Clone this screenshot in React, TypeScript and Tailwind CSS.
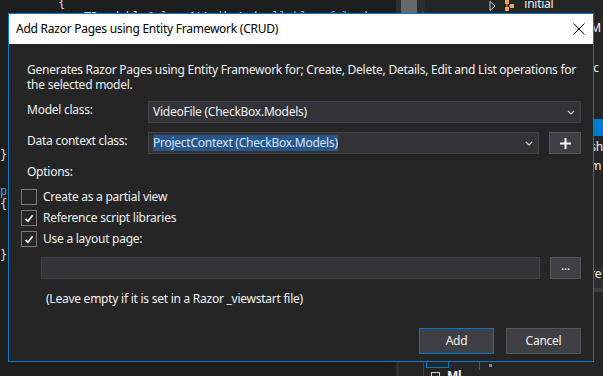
import React from "react";

const ui = { fontFamily: '"Noto Sans", "Open Sans", sans-serif' };
const mono = { fontFamily: '"DejaVu Sans Mono", "Liberation Mono", monospace' };

const Chevron = () => (
  <svg width="8" height="5" viewBox="0 0 8 5" className="shrink-0">
    <path d="M1 1 L4 4 L7 1" fill="none" stroke="#d0d0d0" strokeWidth="1.2" />
  </svg>
);

const Check = () => (
  <svg width="10" height="9" viewBox="0 0 10 9">
    <path d="M1.5 4.8 L4 7.3 L8.6 1.2" fill="none" stroke="#f1f1f1" strokeWidth="1.7" />
  </svg>
);

const CheckRow = ({ label, checked }: { label: string; checked?: boolean }) => (
  <div className="flex items-center gap-[6px] h-[16px]">
    <div className="w-[16px] h-[16px] border border-[#7a7a7a] flex items-center justify-center">
      {checked && <Check />}
    </div>
    <span className="leading-[16px]">{label}</span>
  </div>
);

// editor, scrollbar and solution explorer behind the dialog
const Backdrop = () => (
  <div className="flex w-full h-full">
    <div className="w-[398px] h-full flex text-[12px] text-[#dcdcdc]" style={mono}>
      <div className="w-[8px] h-full flex flex-col items-start">
        <span className="mt-[148px] leading-[15px]">{"}"}</span>
        <span className="mt-[21px] leading-[15px] text-[#569cd6]">p</span>
        <span className="leading-[15px] -mt-[2px]">{"{"}</span>
        <span className="mt-[36px] leading-[15px]">{"}"}</span>
      </div>
      <div className="flex-1 flex flex-col pl-[50px] -mt-[4px] leading-[14px] whitespace-pre">
        <span>{"{"}</span>
        <span className="pl-[26px]">
          TReadable<span className="text-[#d69d85]">Column</span>Attribute(
          <span className="text-[#4ec9b0]">nullable</span>: <span className="text-[#569cd6]">false</span>)
        </span>
      </div>
    </div>
    <div className="w-[30px] h-full bg-[#2e2e2e] flex flex-col">
      <div className="ml-[5px] w-[16px] h-[13px] bg-[#686868]" />
      <div className="mt-auto h-[14px] ml-[3px] bg-[#252526]" />
    </div>
    <div className="flex-1 h-full bg-[#252526] flex flex-col text-[12px] text-[#f1f1f1]">
      <div className="flex items-center h-[11px] pl-[64px] gap-[8px]">
        <svg width="7" height="10" viewBox="0 0 7 10">
          <path d="M1 0.5 L6 5 L1 9.5 Z" fill="none" stroke="#cfcfcf" />
        </svg>
        <svg width="12" height="11" viewBox="0 0 12 11">
          <rect x="1" y="0" width="4" height="4" fill="#e8a85c" />
          <rect x="6" y="4" width="4" height="4" fill="#e8a85c" />
          <rect x="1" y="7" width="4" height="4" fill="#e8a85c" />
          <path d="M3 4 V7 M5 6 H6" stroke="#e8a85c" />
        </svg>
        <span className="leading-[12px] -mt-[3px]">initial</span>
      </div>
      <div className="flex-1 flex border-l border-[#3f3f46] ml-[-2px]">
        <div className="w-[165px] flex flex-col justify-end">
          <div className="h-[14px] flex items-start gap-[5px] pl-[2px]">
            <div className="w-[23px] h-[6px] border-x border-b border-[#007acc]" />
            <div className="ml-[25px] w-px h-[8px] bg-[#555]" />
            <div className="ml-[4px] mt-[2px] w-[3px] h-[3px] bg-[#888]" />
          </div>
        </div>
        <div className="flex-1 flex flex-col overflow-hidden leading-[15px] pl-[1px]">
          <span className="mt-[9px]">M</span>
          <span className="mt-[25px]">.c</span>
          <div className="mt-[44px] h-[17px] bg-[#007acc] -ml-[1px]" />
          <span className="mt-[3px]">sh</span>
          <span className="mt-[4px]">m</span>
          <div className="mt-[28px] w-[2px] h-[10px] bg-[#b5cea8] -ml-[1px]" />
          <div className="mt-[55px] h-[22px] bg-[#2d2d30] -ml-[1px] pl-[1px]">re</div>
          <div className="h-[4px] bg-[#3c3c3c] -ml-[1px]" />
        </div>
      </div>
    </div>
  </div>
);

export default function App() {
  return (
    <div className="relative w-[603px] h-[376px] overflow-hidden bg-[#1e1e1e] tracking-[-0.25px]" style={ui}>
      <Backdrop />
      {/* bottom strip item peeking under the dialog */}
      <div className="absolute left-[431px] top-[370px] flex items-center gap-[7px]">
        <div className="w-[9px] h-[9px] border border-[#d0d0d0]" />
        <span className="text-[12px] font-bold text-[#f1f1f1] leading-[12px]">Ml</span>
      </div>

      <div className="absolute left-[8px] top-[13px] w-[586px] h-[349px] border border-[#007acc] bg-[#252526] flex flex-col">
        <div className="h-[30px] bg-white flex items-center justify-between pl-[7px] pr-[8px] shrink-0">
          <span className="text-[12px] text-black">Add Razor Pages using Entity Framework (CRUD)</span>
          <svg width="12" height="12" viewBox="0 0 12 12">
            <path d="M0.5 0.5 L11.5 11.5 M11.5 0.5 L0.5 11.5" stroke="#000" strokeWidth="1" />
          </svg>
        </div>

        <div className="flex-1 flex flex-col px-[12px] pt-[18px] pb-[7px] text-[#f1f1f1] text-[12px]">
          <p className="ml-[6px] leading-[15px]">
            Generates Razor Pages using Entity Framework for; Create, Delete, Details, Edit and List operations for the selected model.
          </p>

          <div className="flex items-center mt-[9px] ml-[6px]">
            <span className="w-[121px] shrink-0 -mt-[4px]">Model class:</span>
            <div className="flex-1 h-[22px] bg-[#333337] border border-[#434346] flex items-center justify-between pl-[4px] pr-[5px]">
              <span>VideoFile (CheckBox.Models)</span>
              <Chevron />
            </div>
          </div>

          <div className="flex items-center mt-[9px] ml-[6px]">
            <span className="w-[121px] shrink-0 -mt-[4px]">Data context class:</span>
            <div className="flex-1 h-[22px] bg-[#333337] border border-[#434346] flex items-center justify-between pl-[4px] pr-[5px]">
              <span className="bg-[#28568a] text-[#d6e6ff] leading-[16px]">ProjectContext (CheckBox.Models)</span>
              <Chevron />
            </div>
            <div className="ml-[10px] w-[32px] h-[22px] bg-[#3f3f46] border border-[#555555] flex items-center justify-center">
              <svg width="11" height="11" viewBox="0 0 11 11">
                <path d="M5.5 0 V11 M0 5.5 H11" stroke="#ffffff" strokeWidth="2" />
              </svg>
            </div>
          </div>

          <div className="ml-[6px] mt-[10px] leading-[15px]">Options:</div>

          <div className="mt-[10px] flex flex-col gap-[5px]">
            <CheckRow label="Create as a partial view" />
            <CheckRow label="Reference script libraries" checked />
            <CheckRow label="Use a layout page:" checked />
          </div>

          <div className="flex items-center mt-[10px] ml-[20px]">
            <div className="flex-1 h-[22px] bg-[#333337] border border-[#434346]" />
            <div className="ml-[10px] w-[31px] h-[22px] bg-[#3f3f46] border border-[#555555] flex items-center justify-center leading-none pb-[4px]">
              ...
            </div>
          </div>

          <div className="ml-[25px] mt-[12px] leading-[15px]">(Leave empty if it is set in a Razor _viewstart file)</div>

          <div className="mt-auto flex justify-end gap-[12px]">
            <button className="w-[75px] h-[26px] bg-[#3f3f46] border border-[#007acc] text-[12px] text-[#f1f1f1]">Add</button>
            <button className="w-[75px] h-[26px] bg-[#3f3f46] border border-[#555555] text-[12px] text-[#f1f1f1]">Cancel</button>
          </div>
        </div>
      </div>
    </div>
  );
}
